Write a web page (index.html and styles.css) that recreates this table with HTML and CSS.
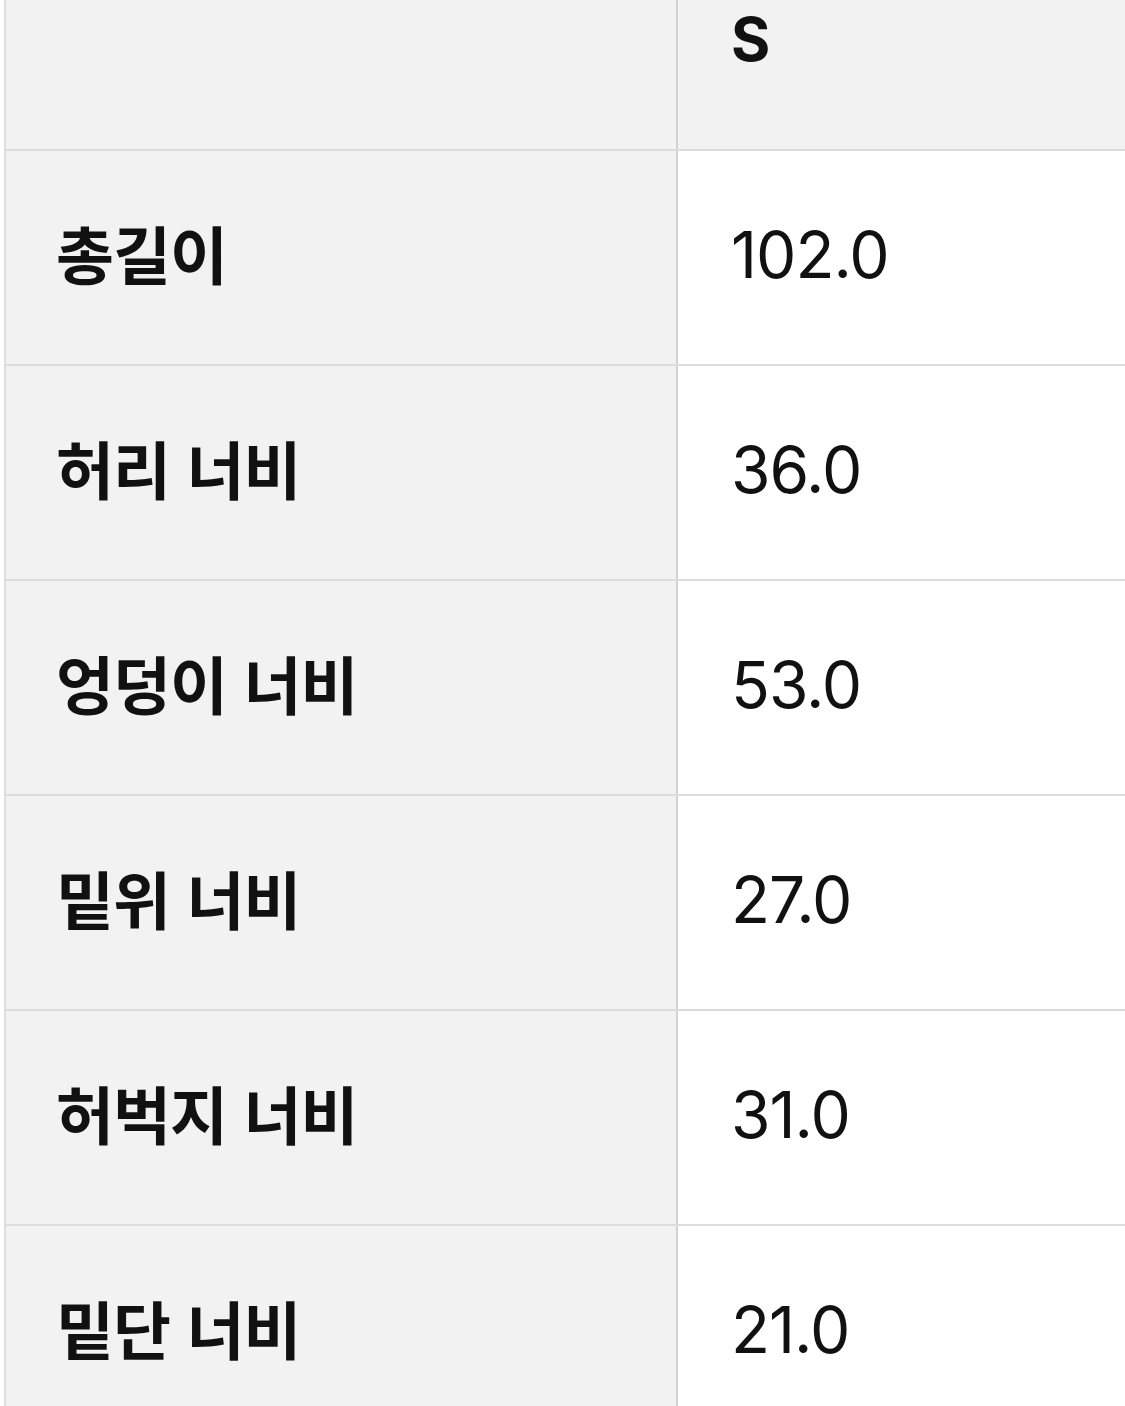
FILE: index.html
```html
<!DOCTYPE html>
<html lang="ko">
<head>
<meta charset="utf-8">
<link rel="stylesheet" href="styles.css">
</head>
<body>
<div class="viewport">
<table class="size-table">
  <thead>
    <tr><th class="label"></th><th class="value head">S</th></tr>
  </thead>
  <tbody>
    <tr><th class="label">총길이</th><td class="value">102.0</td></tr>
    <tr><th class="label">허리 너비</th><td class="value">36.0</td></tr>
    <tr><th class="label">엉덩이 너비</th><td class="value">53.0</td></tr>
    <tr><th class="label">밑위 너비</th><td class="value">27.0</td></tr>
    <tr><th class="label">허벅지 너비</th><td class="value">31.0</td></tr>
    <tr><th class="label">밑단 너비</th><td class="value">21.0</td></tr>
  </tbody>
</table>
</div>
</body>
</html>
```

FILE: styles.css
```css
html, body {
  margin: 0;
  padding: 0;
  background: #ffffff;
  overflow: hidden;
}
.viewport {
  width: 1125px;
  height: 1406px;
  overflow: hidden;
}
.size-table {
  margin-top: -65px;
  margin-left: 4px;
  border-collapse: collapse;
  border-left: 2px solid #dedede;
  width: 1300px;
  table-layout: fixed;
}
.size-table tr {
  height: 215px;
}
.size-table th,
.size-table td {
  border-bottom: 2px solid #dcdcdc;
  padding: 0 0 0 50px;
  text-align: left;
  vertical-align: middle;
  color: #111;
}
.label {
  width: 620px;
  background: #f2f2f2;
  border-right: 2px solid #d2d2d2;
  font-family: "Noto Sans CJK KR", "Noto Sans", sans-serif;
  font-weight: 700;
  font-size: 63px;
  letter-spacing: -1px;
}
.size-table th.label {
  padding-bottom: 12px;
}
.value {
  background: #ffffff;
  font-family: Inter, "Noto Sans", sans-serif;
  font-weight: 400;
  font-size: 64px;
  letter-spacing: -1px;
}
.size-table td.value,
.size-table th.value {
  padding-left: 53px;
  padding-bottom: 6px;
}
.value.head {
  background: #f2f2f2;
  font-weight: 700;
  font-size: 60px;
}
```
